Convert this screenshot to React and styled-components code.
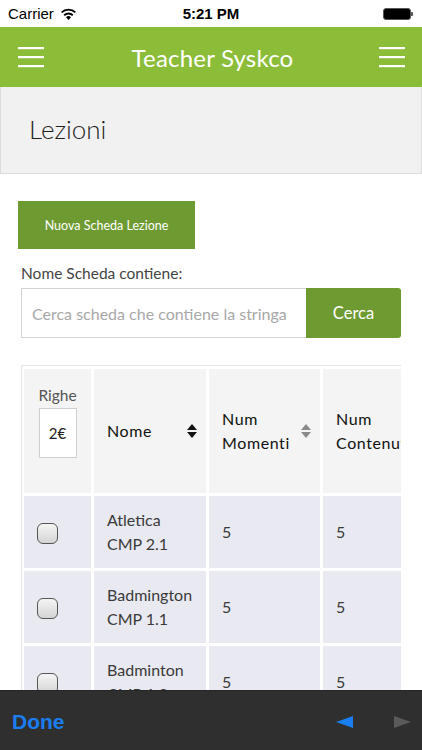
import React from "react";
import styled, { createGlobalStyle } from "styled-components";

const GlobalStyle = createGlobalStyle`
  html, body {
    margin: 0;
    padding: 0;
    background: #ffffff;
    overflow: hidden;
  }
  body {
    font-family: Lato, "Open Sans", sans-serif;
    color: #333;
  }
  * {
    box-sizing: border-box;
  }
`;

const rows = [
  { name: "Atletica", sub: "CMP 2.1", momenti: 5, contenuti: 5 },
  { name: "Badmington", sub: "CMP 1.1", momenti: 5, contenuti: 5 },
  { name: "Badminton", sub: "CMP 1.2", momenti: 5, contenuti: 5 },
];

const HamburgerIcon = () => (
  <svg width="26" height="22" viewBox="0 0 26 22">
    <rect x="0" y="1" width="26" height="2.2" fill="#fff" />
    <rect x="0" y="10" width="26" height="2.2" fill="#fff" />
    <rect x="0" y="19" width="26" height="2.2" fill="#fff" />
  </svg>
);

const SortIcon = ({ color }) => (
  <svg width="10" height="14" viewBox="0 0 10 14">
    <path d="M5 0 L10 6 H0 Z" fill={color} />
    <path d="M5 14 L10 8 H0 Z" fill={color} />
  </svg>
);

const App = () => {
  return (
    <Page>
      <GlobalStyle />
      <StatusBar>
        <Carrier>
          Carrier
          <svg width="17" height="12" viewBox="0 0 17 12">
            <path d="M8.5 12 L6 9.2 A3.6 3.6 0 0 1 11 9.2 Z" fill="#000" />
            <path d="M3.6 6.6 A7 7 0 0 1 13.4 6.6 L12.2 7.9 A5.3 5.3 0 0 0 4.8 7.9 Z" fill="#000" />
            <path d="M1 3.8 A10.8 10.8 0 0 1 16 3.8 L14.8 5.1 A9 9 0 0 0 2.2 5.1 Z" fill="#000" />
          </svg>
        </Carrier>
        <Clock>5:21 PM</Clock>
        <Battery>
          <BatteryBody />
          <BatteryTip />
        </Battery>
      </StatusBar>

      <Header>
        <HamburgerIcon />
        <HeaderTitle>Teacher Syskco</HeaderTitle>
        <HamburgerIcon />
      </Header>

      <TitlePanel>
        <PageTitle>Lezioni</PageTitle>
      </TitlePanel>

      <Content>
        <NewButton>Nuova Scheda Lezione</NewButton>
        <FieldLabel>Nome Scheda contiene:</FieldLabel>
        <SearchRow>
          <SearchInput placeholder="Cerca scheda che contiene la stringa" />
          <SearchButton>Cerca</SearchButton>
        </SearchRow>

        <TableWrap>
          <Table>
            <colgroup>
              <col style={{ width: 67 }} />
              <col style={{ width: 112 }} />
              <col style={{ width: 111 }} />
              <col style={{ width: 111 }} />
            </colgroup>
            <thead>
              <tr>
                <HeadCell>
                  <RigheBox>
                    <RigheLabel>Righe</RigheLabel>
                    <RigheInput>2€</RigheInput>
                  </RigheBox>
                </HeadCell>
                <HeadCell>
                  <HeadInner>
                    <span>Nome</span>
                    <SortIcon color="#111" />
                  </HeadInner>
                </HeadCell>
                <HeadCell>
                  <HeadInner>
                    <span>
                      Num
                      <br />
                      Momenti
                    </span>
                    <SortIcon color="#8a8a8a" />
                  </HeadInner>
                </HeadCell>
                <HeadCell>
                  <HeadInner>
                    <span>
                      Num
                      <br />
                      Contenuti
                    </span>
                    <SortIcon color="#8a8a8a" />
                  </HeadInner>
                </HeadCell>
              </tr>
            </thead>
            <tbody>
              {rows.map((r) => (
                <tr key={r.name + r.sub}>
                  <BodyCell>
                    <CheckBox />
                  </BodyCell>
                  <BodyCell>
                    {r.name}
                    <br />
                    {r.sub}
                  </BodyCell>
                  <BodyCell>{r.momenti}</BodyCell>
                  <BodyCell>{r.contenuti}</BodyCell>
                </tr>
              ))}
            </tbody>
          </Table>
        </TableWrap>
      </Content>

      <Toolbar>
        <DoneButton>Done</DoneButton>
        <Arrows>
          <Arrow $dir="left" $color="#1a7ef0" />
          <Arrow $dir="right" $color="#5a5a5a" />
        </Arrows>
      </Toolbar>
    </Page>
  );
};

const Page = styled.div`
  width: 422px;
  height: 750px;
  overflow: hidden;
  position: relative;
`;

const StatusBar = styled.div`
  height: 27px;
  display: flex;
  align-items: center;
  justify-content: space-between;
  padding: 0 8px 0 8px;
  font-family: "Liberation Sans", Arial, sans-serif;
  font-size: 15px;
  color: #000;
  position: relative;
`;

const Carrier = styled.div`
  display: flex;
  align-items: center;
  gap: 6px;
`;

const Clock = styled.div`
  position: absolute;
  left: 0;
  right: 0;
  text-align: center;
  font-weight: bold;
  pointer-events: none;
`;

const Battery = styled.div`
  display: flex;
  align-items: center;
  margin-right: 1px;
`;

const BatteryBody = styled.div`
  width: 28px;
  height: 12px;
  background: #000;
  border-radius: 3px;
  border: 1px solid #555;
`;

const BatteryTip = styled.div`
  width: 2px;
  height: 4px;
  background: #555;
  border-radius: 0 1px 1px 0;
`;

const Header = styled.div`
  height: 60px;
  background: #8bbd39;
  display: flex;
  align-items: center;
  justify-content: space-between;
  padding: 0 17px 0 18px;
`;

const HeaderTitle = styled.div`
  color: #ffffff;
  font-size: 24px;
  font-weight: 400;
  letter-spacing: 0.2px;
  margin-left: 2px;
`;

const TitlePanel = styled.div`
  height: 87px;
  background: #f1f1f1;
  border: 1px solid #dcdcdc;
  border-top: none;
  display: flex;
  align-items: center;
  padding-left: 28px;
`;

const PageTitle = styled.h1`
  margin: 0;
  font-size: 26px;
  font-weight: 300;
  color: #1e1e1e;
  padding-bottom: 2px;
`;

const Content = styled.div`
  padding: 27px 0 0 18px;
`;

const NewButton = styled.button`
  width: 177px;
  height: 48px;
  background: #6e9b31;
  color: #fff;
  border: none;
  font-family: Lato, sans-serif;
  font-size: 12.5px;
  padding: 0;
  display: block;
`;

const FieldLabel = styled.div`
  margin: 15px 0 6px 3px;
  font-size: 15.5px;
  color: #444;
  line-height: 18px;
`;

const SearchRow = styled.div`
  display: flex;
  margin-left: 3px;
  width: 380px;
  height: 50px;
`;

const SearchInput = styled.input`
  flex: 1;
  min-width: 0;
  height: 50px;
  border: 1px solid #d4d4d4;
  border-right: none;
  padding: 0 10px;
  font-family: Lato, sans-serif;
  font-size: 16px;
  color: #333;
  outline: none;
  &::placeholder {
    color: #a8a8a8;
  }
`;

const SearchButton = styled.button`
  width: 95px;
  height: 50px;
  background: #6e9b31;
  color: #fff;
  border: none;
  border-radius: 0 3px 3px 0;
  font-family: Lato, sans-serif;
  font-size: 16.5px;
`;

const TableWrap = styled.div`
  margin: 27px 0 0 3px;
  width: 380px;
  overflow: hidden;
  border-top: 1px solid #e4e4e4;
  border-left: 1px solid #e4e4e4;
`;

const Table = styled.table`
  border-collapse: separate;
  border-spacing: 3px 3px;
  margin-left: -1px;
  table-layout: fixed;
  width: 416px;
  font-size: 16px;
  color: #2b2b2b;
`;

const HeadCell = styled.th`
  height: 124px;
  background: #f4f4f4;
  text-align: left;
  font-weight: 400;
  padding: 0 9px 0 13px;
  vertical-align: middle;
`;

const HeadInner = styled.div`
  display: flex;
  align-items: center;
  justify-content: space-between;
  line-height: 24px;
  letter-spacing: 0.6px;
  white-space: nowrap;
  color: #111;
`;

const RigheBox = styled.div`
  display: flex;
  flex-direction: column;
  align-items: center;
  margin-left: -13px;
  margin-right: -9px;
  padding-bottom: 20px;
`;

const RigheLabel = styled.div`
  font-size: 15.5px;
  font-weight: 400;
  color: #555;
  line-height: 20px;
  margin-bottom: 3px;
`;

const RigheInput = styled.div`
  width: 38px;
  height: 50px;
  border: 1px solid #cfcfcf;
  background: #fff;
  display: flex;
  align-items: center;
  justify-content: center;
  font-size: 15px;
  font-weight: 400;
  color: #222;
`;

const BodyCell = styled.td`
  height: 72px;
  background: #e8e9f1;
  padding: 0 8px 0 13px;
  line-height: 24px;
  vertical-align: middle;
  color: #3a3a3a;
`;

const CheckBox = styled.span`
  display: inline-block;
  width: 21px;
  height: 21px;
  border: 1.5px solid #555;
  border-radius: 6px;
  background: linear-gradient(#f5f5f5, #d4d4d4);
  vertical-align: middle;
`;

const Toolbar = styled.div`
  position: absolute;
  left: 0;
  right: 0;
  bottom: 0;
  height: 60px;
  background: #2f2f2f;
  border-top: 1px solid #262626;
  display: flex;
  align-items: center;
  justify-content: space-between;
  padding: 0 11px 0 12px;
`;

const DoneButton = styled.div`
  color: #1a7ef0;
  font-family: "Liberation Sans", Arial, sans-serif;
  font-weight: bold;
  font-size: 21px;
  margin-top: 2px;
`;

const Arrows = styled.div`
  display: flex;
  align-items: center;
  gap: 41px;
  margin-top: 3px;
`;

const Arrow = styled.span`
  width: 0;
  height: 0;
  border-top: 6px solid transparent;
  border-bottom: 6px solid transparent;
  ${(p) =>
    p.$dir === "left"
      ? `border-right: 17px solid ${p.$color};`
      : `border-left: 17px solid ${p.$color};`}
`;

export default App;
